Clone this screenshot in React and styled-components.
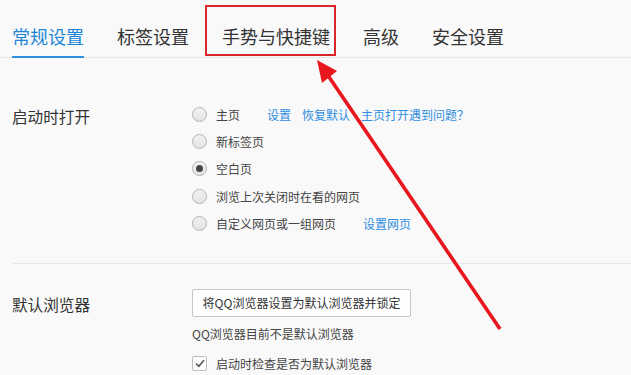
import React, { useState } from 'react';
import styled, { createGlobalStyle } from 'styled-components';

const tabs = ['常规设置', '标签设置', '手势与快捷键', '高级', '安全设置'];

const startupOptions = [
  { label: '主页', links: ['设置', '恢复默认', '主页打开遇到问题？'] },
  { label: '新标签页' },
  { label: '空白页' },
  { label: '浏览上次关闭时在看的网页' },
  { label: '自定义网页或一组网页', links: ['设置网页'] },
];

export default function App() {
  const [active] = useState(0);
  const [startup, setStartup] = useState(2);
  const [checkDefault, setCheckDefault] = useState(true);

  return (
    <Page>
      <GlobalStyle />
      <TabBar>
        {tabs.map((t, i) => (
          <Tab key={t} active={i === active}>
            {t}
            {i === 2 && <Highlight />}
          </Tab>
        ))}
      </TabBar>

      <Section>
        <Label>启动时打开</Label>
        <Options>
          {startupOptions.map((o, i) => (
            <OptionRow key={o.label} onClick={() => setStartup(i)}>
              <Radio checked={startup === i} />
              <span>{o.label}</span>
              {o.links && (
                <Links>
                  {o.links.map((l) => (
                    <Link key={l}>{l}</Link>
                  ))}
                </Links>
              )}
            </OptionRow>
          ))}
        </Options>
      </Section>

      <Section divided>
        <Label>默认浏览器</Label>
        <Options>
          <Button>将QQ浏览器设置为默认浏览器并锁定</Button>
          <Note>QQ浏览器目前不是默认浏览器</Note>
          <CheckRow onClick={() => setCheckDefault(!checkDefault)}>
            <Checkbox>
              {checkDefault && (
                <svg width="10" height="9" viewBox="0 0 10 9">
                  <path d="M1 4.5 L3.8 7.3 L9 1.2" fill="none" stroke="#555" strokeWidth="1.6" />
                </svg>
              )}
            </Checkbox>
            <span>启动时检查是否为默认浏览器</span>
          </CheckRow>
        </Options>
      </Section>

      <Arrow width="631" height="375" viewBox="0 0 631 375">
        <line x1="500" y1="329" x2="327" y2="74" stroke="#e8161d" strokeWidth="3.6" />
        <polygon points="317,60 337,71 322,83" fill="#e8161d" />
      </Arrow>
    </Page>
  );
}

const GlobalStyle = createGlobalStyle`
  html, body {
    margin: 0;
    padding: 0;
    background: #f9f9f9;
  }
  body {
    font-family: "Noto Sans CJK SC", "Noto Sans", sans-serif;
    color: #333;
  }
`;

const Page = styled.div`
  position: relative;
  width: 631px;
  height: 375px;
  overflow: hidden;
  background: #f9f9f9;
`;

const TabBar = styled.div`
  display: flex;
  gap: 33px;
  padding: 0 12px;
  height: 58px;
  border-bottom: 1px solid #e6e6e6;
  box-sizing: border-box;
`;

const Tab = styled.div`
  position: relative;
  padding-top: 25px;
  height: 58px;
  box-sizing: border-box;
  font-size: 18px;
  line-height: 22px;
  color: ${({ active }) => (active ? '#2185d8' : '#333')};
  border-bottom: 2px solid ${({ active }) => (active ? '#2f8fe0' : 'transparent')};
  cursor: pointer;
  white-space: nowrap;
`;

const Highlight = styled.span`
  position: absolute;
  left: -17px;
  right: -6px;
  top: 5px;
  bottom: 0;
  border: 2px solid #d9252c;
`;

const Section = styled.div`
  display: grid;
  grid-template-columns: 180px 1fr;
  margin-left: 12px;
  padding-top: ${({ divided }) => (divided ? '25px' : '43px')};
  padding-bottom: 26px;
  border-top: ${({ divided }) => (divided ? '1px solid #e8e8e8' : 'none')};
`;

const Label = styled.div`
  font-size: 15.6px;
  line-height: 28px;
  padding-top: 1px;
  color: #333;
`;

const Options = styled.div`
  display: flex;
  flex-direction: column;
  align-items: flex-start;
`;

const OptionRow = styled.div`
  display: flex;
  align-items: center;
  height: 27.2px;
  font-size: 12px;
  color: #444;
  cursor: pointer;
`;

const Radio = styled.span`
  position: relative;
  width: 15px;
  height: 15px;
  margin-right: 9px;
  border-radius: 50%;
  border: 1px solid #b3b3b3;
  box-sizing: border-box;
  background: linear-gradient(#f2f2f2, #e3e3e3);

  &::after {
    content: '';
    display: ${({ checked }) => (checked ? 'block' : 'none')};
    position: absolute;
    left: 3px;
    top: 3px;
    width: 7px;
    height: 7px;
    border-radius: 50%;
    background: #444;
  }
`;

const Links = styled.span`
  display: flex;
  gap: 11px;
  margin-left: 27px;
`;

const Link = styled.a`
  color: #2f8ee0;
  cursor: pointer;
`;

const Button = styled.button`
  width: 219px;
  height: 28px;
  padding: 0;
  border: 1px solid #c6c6c6;
  border-radius: 2px;
  background: #fff;
  font-family: "Noto Sans CJK SC", "Noto Sans", sans-serif;
  font-size: 12px;
  color: #333;
  cursor: pointer;
  white-space: nowrap;
`;

const Note = styled.div`
  margin-top: 7px;
  font-size: 12px;
  line-height: 20px;
  color: #444;
`;

const CheckRow = styled.label`
  display: flex;
  align-items: center;
  margin-top: 10px;
  font-size: 12px;
  line-height: 20px;
  color: #444;
  cursor: pointer;
`;

const Checkbox = styled.span`
  display: flex;
  align-items: center;
  justify-content: center;
  width: 15px;
  height: 15px;
  margin-right: 9px;
  border: 1px solid #bdbdbd;
  border-radius: 2px;
  box-sizing: border-box;
  background: #fdfdfd;
`;

const Arrow = styled.svg`
  position: absolute;
  left: 0;
  top: 0;
  pointer-events: none;
`;
